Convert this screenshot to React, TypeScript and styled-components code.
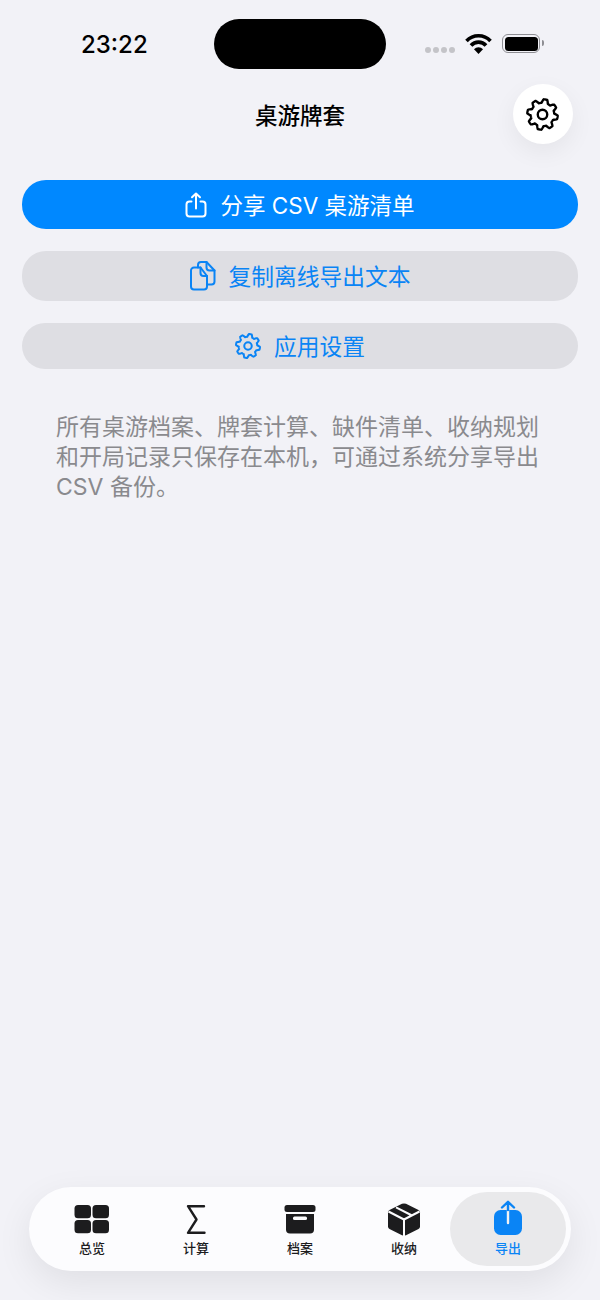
import React from 'react';
import styled, { createGlobalStyle } from 'styled-components';

const BLUE = '#0a84f5';
const FONT = 'Inter, "Noto Sans CJK SC", sans-serif';

// eight round teeth, sampled so the outline stays smooth
const gearPath = (cx: number, cy: number, outer: number, inner: number) => {
    const points: string[] = [];
    for (let i = 0; i < 240; i++) {
        const a = (i / 240) * Math.PI * 2;
        const wave = Math.max(-1, Math.min(1, Math.cos(a * 8 - Math.PI / 2) * 1.7));
        const r = inner + ((outer - inner) * (wave + 1)) / 2;
        points.push(`${(cx + Math.cos(a) * r).toFixed(2)} ${(cy + Math.sin(a) * r).toFixed(2)}`);
    }
    return `M${points.join('L')}Z`;
};

const GearIcon = ({ size, color, width }: { size: number; color: string; width: number }) => (
    <svg width={size} height={size} viewBox="0 0 32 32" fill="none" stroke={color} strokeWidth={width} strokeLinejoin="round">
        <path d={gearPath(16, 16, 14.8, 11.4)} />
        <circle cx="16" cy="16" r="4.6" />
    </svg>
);

const ShareIcon = () => (
    <svg width="22" height="26" viewBox="0 0 22 26" fill="none" stroke="#fff" strokeWidth="2" strokeLinecap="round" strokeLinejoin="round">
        <path d="M6.500 9.500H4.500A3 3 0 0 0 1.500 12.500V21.500A3 3 0 0 0 4.500 24.500H17.500A3 3 0 0 0 20.500 21.500V12.500A3 3 0 0 0 17.500 9.500H15.500" />
        <path d="M11 16.500V1.500M7 5.300L11 1.500L15 5.300" />
    </svg>
);

const CopyDocIcon = () => (
    <svg width="26" height="30" viewBox="0 0 26 30" fill="none" stroke={BLUE} strokeWidth="2" strokeLinecap="round" strokeLinejoin="round">
        <path d="M8 6.500H4A3 3 0 0 0 1 9.500V25.500A3 3 0 0 0 4 28.500H14A3 3 0 0 0 17 25.500V15L10.500 6.500H8Z" />
        <path d="M10.500 6.500V12A3 3 0 0 0 13.500 15H17" />
        <path d="M8 6.500V4A3 3 0 0 1 11 1H16.500L24.500 9.500V20.500A3 3 0 0 1 21.500 23.500H17" />
        <path d="M16.500 1V6.500A3 3 0 0 0 19.500 9.500H24.500" />
    </svg>
);

const GridIcon = () => (
    <svg width="36" height="31" viewBox="0 0 36 31" fill="#1c1c1e">
        <rect x="0.500" y="0" width="16.500" height="13.200" rx="3.500" />
        <rect x="18.500" y="0" width="16.500" height="13.200" rx="3.500" />
        <rect x="0.500" y="15" width="16.500" height="13.200" rx="3.500" />
        <rect x="18.500" y="15" width="16.500" height="13.200" rx="3.500" />
    </svg>
);

const SigmaIcon = () => (
    <svg width="20" height="31" viewBox="0 0 20 31" fill="none" stroke="#1c1c1e" strokeWidth="2.400" strokeLinecap="round" strokeLinejoin="round">
        <path d="M18 1.200H2L10.500 14.500L2 27.800H18.500" />
    </svg>
);

const ArchiveIcon = () => (
    <svg width="32" height="31" viewBox="0 0 32 31" fill="#1c1c1e">
        <rect x="0.500" y="0" width="31" height="7" rx="2.500" />
        <path d="M2 9H30V24.500A4 4 0 0 1 26 28.500H6A4 4 0 0 1 2 24.500Z" />
        <rect x="9" y="11.500" width="14" height="3.500" rx="1.500" fill="#fcfcfe" />
    </svg>
);

const BoxIcon = () => (
    <svg width="34" height="33" viewBox="0 0 34 33">
        <path
            d="M15 .8Q17 0 19 .8L31.500 7Q33 7.800 33 9.500V23.500Q33 25.200 31.500 26L19 32.200Q17 33 15 32.200L2.500 26Q1 25.200 1 23.500V9.500Q1 7.800 2.500 7Z"
            fill="#1c1c1e"
        />
        <path d="M1.500 8.500L17 16.500L32.500 8.500M17 16.500V33M9 4.300L25 12.500" fill="none" stroke="#fcfcfe" strokeWidth="2" />
    </svg>
);

const ExportIcon = () => (
    <svg width="30" height="36" viewBox="0 0 30 36" fill="none">
        <rect x="1" y="10" width="28" height="25" rx="6.500" fill={BLUE} />
        <path d="M15 10V23" stroke="#f2f2f4" strokeWidth="2.400" strokeLinecap="round" />
        <path d="M15 10V2M9 7.500L15 1.800L21 7.500" stroke={BLUE} strokeWidth="2.400" strokeLinecap="round" strokeLinejoin="round" />
    </svg>
);

const App = () => {
    return (
        <Page>
            <GlobalStyle />
            <StatusBar>
                <Clock>23:22</Clock>
                <Island />
                <StatusIcons>
                    <SignalDots>
                        <Dot /><Dot /><Dot /><Dot />
                    </SignalDots>
                    <svg width="27" height="20" viewBox="0 0 27 20" fill="none" stroke="#000" strokeWidth="3.600">
                        <path d="M1.500 7A16.500 16.500 0 0 1 25.500 7" />
                        <path d="M6 11.500A10 10 0 0 1 21 11.500" />
                        <path d="M13.500 20L9 15.200A6 6 0 0 1 18 15.200Z" fill="#000" stroke="none" />
                    </svg>
                    <Battery>
                        <BatteryLevel />
                    </Battery>
                </StatusIcons>
            </StatusBar>

            <Header>
                <Title>桌游牌套</Title>
                <RoundButton>
                    <GearIcon size={33} color="#000" width={2.300} />
                </RoundButton>
            </Header>

            <Actions>
                <ActionButton $height={49} $primary>
                    <ShareIcon />
                    <ButtonLabel>分享 CSV 桌游清单</ButtonLabel>
                </ActionButton>
                <ActionButton $height={50}>
                    <CopyDocIcon />
                    <ButtonLabel>复制离线导出文本</ButtonLabel>
                </ActionButton>
                <ActionButton $height={46}>
                    <GearIcon size={26} color={BLUE} width={2.500} />
                    <ButtonLabel>应用设置</ButtonLabel>
                </ActionButton>
            </Actions>

            <Note>所有桌游档案、牌套计算、缺件清单、收纳规划和开局记录只保存在本机，可通过系统分享导出 CSV 备份。</Note>

            <TabBar>
                <TabItem>
                    <TabIcon><GridIcon /></TabIcon>
                    <TabLabel>总览</TabLabel>
                </TabItem>
                <TabItem>
                    <TabIcon><SigmaIcon /></TabIcon>
                    <TabLabel>计算</TabLabel>
                </TabItem>
                <TabItem>
                    <TabIcon><ArchiveIcon /></TabIcon>
                    <TabLabel>档案</TabLabel>
                </TabItem>
                <TabItem>
                    <TabIcon><BoxIcon /></TabIcon>
                    <TabLabel>收纳</TabLabel>
                </TabItem>
                <TabItem $active>
                    <TabIcon><ExportIcon /></TabIcon>
                    <TabLabel $active>导出</TabLabel>
                </TabItem>
            </TabBar>
        </Page>
    );
};

export default App;

const GlobalStyle = createGlobalStyle`
    html, body {
        margin: 0;
        padding: 0;
        background: #f2f2f7;
    }
`;

const Page = styled.div`
    width: 600px;
    height: 1300px;
    display: flex;
    flex-direction: column;
    overflow: hidden;
    background: #f2f2f7;
    font-family: ${FONT};
`;

const StatusBar = styled.div`
    display: grid;
    grid-template-columns: 214px 172px 214px;
    align-items: center;
    height: 50px;
    margin-top: 19px;
`;

const Clock = styled.div`
    padding-left: 81px;
    font-size: 24px;
    font-weight: 500;
    color: #000;
`;

const Island = styled.div`
    height: 50px;
    border-radius: 25px;
    background: #000;
`;

const StatusIcons = styled.div`
    display: flex;
    align-items: center;
    padding: 0 0 1px 39px;
`;

const SignalDots = styled.div`
    display: flex;
    gap: 2px;
    margin: 12px 10px 0 0;
`;

const Dot = styled.span`
    width: 6px;
    height: 6px;
    border-radius: 50%;
    background: #c4c4c8;
`;

const Battery = styled.div`
    position: relative;
    width: 38px;
    height: 19px;
    margin-left: 10px;
    padding: 1.500px;
    box-sizing: border-box;
    border: 1.500px solid #8e8e93;
    border-radius: 6px;

    &::after {
        content: '';
        position: absolute;
        right: -5px;
        top: 5px;
        width: 2.500px;
        height: 6px;
        border-radius: 0 2px 2px 0;
        background: #8e8e93;
    }
`;

const BatteryLevel = styled.div`
    height: 100%;
    border-radius: 3.500px;
    background: #000;
`;

const Header = styled.div`
    position: relative;
    display: flex;
    align-items: center;
    justify-content: center;
    height: 60px;
    margin-top: 15px;
`;

const Title = styled.h1`
    margin: 0;
    font-size: 22.500px;
    font-weight: 500;
    color: #000;
`;

const RoundButton = styled.div`
    position: absolute;
    right: 27px;
    top: 0;
    width: 60px;
    height: 60px;
    padding-right: 2px;
    box-sizing: border-box;
    display: flex;
    align-items: center;
    justify-content: center;
    border-radius: 50%;
    background: #fff;
    box-shadow: 0 8px 24px rgba(0, 0, 0, 0.06);
`;

const Actions = styled.div`
    display: flex;
    flex-direction: column;
    gap: 22px;
    margin-top: 36px;
    padding: 0 22px;
`;

const ActionButton = styled.div<{ $height: number; $primary?: boolean }>`
    display: flex;
    align-items: center;
    justify-content: center;
    gap: 13px;
    height: ${(p) => p.$height}px;
    border-radius: 24px;
    font-size: ${(p) => (p.$primary ? 22.5 : 22.75)}px;
    color: ${(p) => (p.$primary ? '#fff' : BLUE)};
    background: ${(p) => (p.$primary ? '#0088ff' : '#dedee3')};
`;

const ButtonLabel = styled.span`
    margin-bottom: 2px;
`;

const Note = styled.p`
    margin: 43px 0 0;
    padding: 0 56px;
    font-size: 23px;
    line-height: 30px;
    color: #8a8a8e;
`;

const TabBar = styled.div`
    display: grid;
    grid-template-columns: 116px 92px 116px 92px 116px;
    align-items: stretch;
    height: 74px;
    margin: auto 29px 29px;
    padding: 5px;
    border-radius: 42px;
    background: #fcfcfe;
    box-shadow: 0 12px 36px rgba(0, 0, 0, 0.08);
`;

const TabItem = styled.div<{ $active?: boolean }>`
    display: flex;
    flex-direction: column;
    align-items: center;
    border-radius: 37px;
    background: ${(p) => (p.$active ? '#e9e9eb' : 'transparent')};
`;

const TabIcon = styled.div`
    display: flex;
    align-items: flex-end;
    justify-content: center;
    height: 44px;
`;

const TabLabel = styled.div<{ $active?: boolean }>`
    margin-top: 3px;
    font-size: 13px;
    line-height: 18px;
    font-weight: 500;
    color: ${(p) => (p.$active ? BLUE : '#1c1c1e')};
`;
